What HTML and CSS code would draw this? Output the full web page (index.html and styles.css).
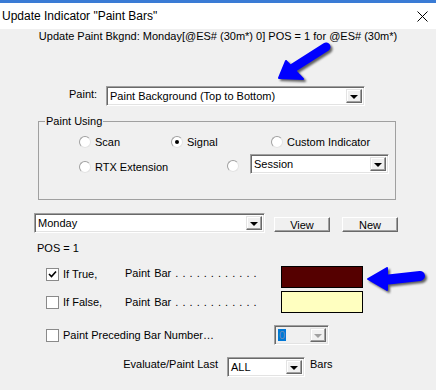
FILE: index.html
```html
<!DOCTYPE html>
<html lang="en">
<head>
    <meta charset="UTF-8">
    <title>Update Indicator "Paint Bars"</title>
    <link rel="stylesheet" href="styles.css">
</head>
<body>
    <div class="window">
        <div class="titlebar">
            <span class="title">Update Indicator "Paint Bars"</span>
            <svg class="close" width="11" height="11" viewBox="0 0 11 11">
                <path d="M0.5 0.5 L10.5 10.5 M10.5 0.5 L0.5 10.5" stroke="#000" stroke-width="1"/>
            </svg>
        </div>

        <div class="dialog">
            <div class="summary">Update Paint Bkgnd: Monday[@ES# (30m*) 0] POS = 1 for @ES# (30m*)</div>

            <div class="paint-row">
                <label class="paint-label">Paint:</label>
                <div class="combo combo-paint">
                    <span class="combo-text">Paint Background (Top to Bottom)</span>
                    <span class="combo-btn"><i class="tri"></i></span>
                </div>
            </div>

            <fieldset class="group">
                <legend>Paint Using</legend>
                <div class="radio-row first">
                    <span class="opt w-scan"><span class="radio"></span>Scan</span>
                    <span class="opt w-signal"><span class="radio on"></span>Signal</span>
                    <span class="opt"><span class="radio"></span>Custom Indicator</span>
                </div>
                <div class="radio-row second">
                    <span class="opt w-rtx low"><span class="radio"></span>RTX Extension</span>
                    <span class="opt w-solo low"><span class="radio"></span></span>
                    <div class="combo combo-session">
                        <span class="combo-text">Session</span>
                        <span class="combo-btn"><i class="tri"></i></span>
                    </div>
                </div>
            </fieldset>

            <div class="cond-row">
                <div class="combo combo-cond">
                    <span class="combo-text">Monday</span>
                    <span class="combo-btn"><i class="tri"></i></span>
                </div>
                <button class="btn btn-view">View</button>
                <button class="btn btn-new">New</button>
            </div>

            <div class="pos">POS = 1</div>

            <div class="bar-row true-row">
                <span class="check on">
                    <svg width="11" height="11" viewBox="0 0 11 11">
                        <path d="M2 5 L4.5 7.5 L9 2.5" fill="none" stroke="#000" stroke-width="1.6"/>
                    </svg>
                </span>
                <span class="cond-label">If True,</span>
                <span class="leader">Paint Bar . . . . . . . . . . . .</span>
                <span class="swatch swatch-true"></span>
            </div>

            <div class="bar-row false-row">
                <span class="check"></span>
                <span class="cond-label">If False,</span>
                <span class="leader">Paint Bar . . . . . . . . . . . .</span>
                <span class="swatch swatch-false"></span>
            </div>

            <div class="preceding-row">
                <span class="check"></span>
                <span class="preceding-label">Paint Preceding Bar Number…</span>
                <div class="combo combo-small disabled">
                    <span class="combo-text"><span class="sel">0</span></span>
                    <span class="combo-btn"><i class="tri"></i></span>
                </div>
            </div>

            <div class="eval-row">
                <span class="eval-label">Evaluate/Paint Last</span>
                <div class="combo combo-eval">
                    <span class="combo-text">ALL</span>
                    <span class="combo-btn"><i class="tri"></i></span>
                </div>
                <span class="bars-label">Bars</span>
            </div>
        </div>

        <!-- callout arrows drawn over the dialog -->
        <svg class="arrow arrow-paint" width="80" height="50" viewBox="270 38 80 50">
            <path d="M326 47 L293 68" stroke="#0000ff" stroke-width="9" stroke-linecap="round"/>
            <path d="M279 78 L286 61 L303 79 Z" fill="#0000ff" stroke="#0000ff" stroke-width="2" stroke-linejoin="round"/>
        </svg>
        <svg class="arrow arrow-true" width="70" height="36" viewBox="362 262 70 36">
            <path d="M384 280 L420 276" stroke="#0000ff" stroke-width="10" stroke-linecap="round"/>
            <path d="M368 279 L387 268 L387 290 Z" fill="#0000ff" stroke="#0000ff" stroke-width="2" stroke-linejoin="round"/>
        </svg>
    </div>
</body>
</html>
```

FILE: styles.css
```css
body {
    margin: 0;
    background: #f0f0f0;
    font-family: "Liberation Sans", Arial, sans-serif;
    font-size: 11px;
    color: #000;
}
.window {
    position: relative;
    width: 436px;
    height: 390px;
    border-top: 3px solid #3a7bd5;
    box-sizing: border-box;
    overflow: hidden;
}
.titlebar {
    height: 26px;
    background: #fff;
    display: flex;
    align-items: center;
    justify-content: space-between;
    padding: 0 8px 0 2px;
}
.title {
    font-size: 12px;
}
.close {
    margin-top: 1px;
}
.dialog {
    display: flex;
    flex-direction: column;
}
.summary {
    height: 14px;
    line-height: 14px;
    text-align: center;
}

/* combo boxes */
.combo {
    display: flex;
    height: 20px;
    box-sizing: border-box;
    background: #fff;
    border: 1px solid;
    border-color: #a0a0a0 #fff #fff #a0a0a0;
    box-shadow: inset 1px 1px #696969, inset -1px -1px #e3e3e3;
    padding: 2px;
}
.combo-text {
    flex: 1;
    line-height: 14px;
    padding-left: 1px;
    white-space: nowrap;
    overflow: hidden;
}
.combo-btn {
    width: 16px;
    height: 14px;
    box-sizing: border-box;
    background: #f0f0f0;
    border: 1px solid;
    border-color: #e3e3e3 #696969 #696969 #e3e3e3;
    box-shadow: inset -1px -1px #a0a0a0, inset 1px 1px #fff;
    display: flex;
    align-items: center;
    justify-content: center;
}
.tri {
    width: 0;
    height: 0;
    border-left: 4px solid transparent;
    border-right: 4px solid transparent;
    border-top: 4px solid #000;
    margin-top: 1px;
}
.combo.disabled {
    background: #f0f0f0;
}
.combo.disabled .tri {
    border-top-color: #a0a0a0;
}
.sel {
    background: #0078d7;
    color: #6d8fb8;
    padding: 0 1px;
}

/* paint row */
.paint-row {
    display: flex;
    align-items: center;
    margin-top: 43px;
    padding-left: 69px;
    height: 20px;
}
.paint-label {
    width: 29px;
    margin-right: 8px;
    margin-top: -5px;
}
.combo-paint {
    width: 259px;
}

/* group box */
.group {
    margin: 8px 0 0 38px;
    padding: 0 0 25px 0;
    width: 358px;
    box-sizing: border-box;
    border: 1px solid #a0a0a0;
    min-inline-size: 0;
}
.group legend {
    margin-left: 6px;
    padding: 0 1px;
    line-height: 14px;
}
.radio-row {
    display: flex;
    padding-left: 40px;
}
.radio-row.first {
    margin-top: 7px;
    height: 14px;
    align-items: center;
}
.radio-row.second {
    margin-top: 5px;
    align-items: flex-start;
}
.opt {
    display: flex;
    align-items: center;
    line-height: 14px;
    white-space: nowrap;
}
.opt.low {
    margin-top: 6px;
}
.w-scan { width: 92px; }
.w-signal { width: 100px; }
.w-rtx { width: 148px; }
.w-solo { width: 23px; }
.radio {
    width: 12px;
    height: 12px;
    box-sizing: border-box;
    border-radius: 50%;
    background: #fff;
    border: 1px solid;
    border-color: #a0a0a0 #e3e3e3 #e3e3e3 #a0a0a0;
    margin-right: 4px;
    display: flex;
    align-items: center;
    justify-content: center;
}
.radio.on::after {
    content: "";
    width: 4px;
    height: 4px;
    border-radius: 50%;
    background: #000;
}
.combo-session {
    width: 139px;
}

/* condition row */
.cond-row {
    display: flex;
    margin-top: 13px;
    padding-left: 34px;
    height: 20px;
}
.combo-cond {
    width: 231px;
}
.btn {
    align-self: flex-end;
    margin-bottom: 1px;
    width: 56px;
    height: 15px;
    padding: 0;
    font: inherit;
    line-height: 12px;
    background: #f0f0f0;
    border: 1px solid;
    border-color: #fff #696969 #696969 #fff;
    box-shadow: inset -1px -1px #a0a0a0;
}
.btn-view {
    margin-left: 9px;
}
.btn-new {
    margin-left: 12px;
}
.pos {
    margin-top: 8px;
    padding-left: 37px;
    line-height: 14px;
}

/* paint bar rows */
.bar-row {
    display: flex;
    align-items: center;
    padding-left: 46px;
    height: 22px;
}
.true-row {
    margin-top: 11px;
}
.false-row {
    margin-top: 3px;
}
.check {
    width: 13px;
    height: 13px;
    box-sizing: border-box;
    background: #fff;
    border: 1px solid #8a8a8a;
    margin-right: 4px;
    display: flex;
    align-items: center;
    justify-content: center;
}
.true-row .check,
.true-row .cond-label {
    margin-top: -6px;
}
.cond-label {
    width: 62px;
}
.true-row .leader {
    margin-top: -9px;
}
.leader {
    width: 156px;
    white-space: nowrap;
    word-spacing: 1px;
}
.swatch {
    width: 82px;
    height: 22px;
    box-sizing: border-box;
    border: 1px solid #000;
}
.swatch-true {
    background: #550000;
}
.swatch-false {
    background: #ffffc0;
}

.preceding-row {
    display: flex;
    align-items: center;
    margin-top: 12px;
    padding-left: 46px;
    height: 20px;
}
.preceding-label {
    width: 211px;
}
.combo-small {
    width: 55px;
}

.eval-row {
    display: grid;
    grid-template-columns: 218px 78px auto;
    column-gap: 0;
    align-items: center;
    margin-top: 12px;
    height: 20px;
}
.eval-label {
    justify-self: end;
    white-space: nowrap;
    margin-top: -6px;
}
.combo-eval {
    margin-left: 9px;
    width: 78px;
}
.bars-label {
    margin-left: 14px;
    margin-top: -6px;
}

.arrow {
    position: absolute;
    filter: drop-shadow(2px 2px 1px rgba(0, 0, 0, 0.6));
}
.arrow-paint {
    left: 270px;
    top: 35px;
}
.arrow-true {
    left: 362px;
    top: 259px;
}
```
